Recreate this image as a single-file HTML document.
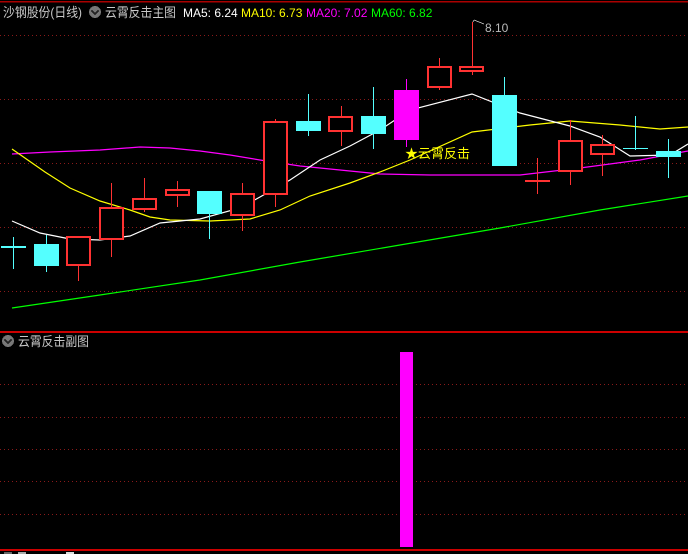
<!DOCTYPE html>
<html><head><meta charset="utf-8"><style>
html,body{margin:0;padding:0;background:#000;width:688px;height:554px;overflow:hidden}
svg{display:block}
text{font-family:"Liberation Sans","Noto Sans CJK SC",sans-serif}
</style></head><body>
<svg width="688" height="554" viewBox="0 0 688 554" xmlns="http://www.w3.org/2000/svg" shape-rendering="crispEdges">
<rect width="688" height="554" fill="#000"/>
<line x1="0" y1="1.5" x2="688" y2="1.5" stroke="#a00" stroke-width="1.5"/>
<g stroke="#8a1a1a" stroke-width="1" stroke-dasharray="1,3">
<line x1="0" y1="35.5" x2="688" y2="35.5"/>
<line x1="0" y1="99.5" x2="688" y2="99.5"/>
<line x1="0" y1="163.5" x2="688" y2="163.5"/>
<line x1="0" y1="227.5" x2="688" y2="227.5"/>
<line x1="0" y1="291.5" x2="688" y2="291.5"/>
<line x1="0" y1="384.5" x2="688" y2="384.5"/>
<line x1="0" y1="417.5" x2="688" y2="417.5"/>
<line x1="0" y1="449.5" x2="688" y2="449.5"/>
<line x1="0" y1="481.5" x2="688" y2="481.5"/>
<line x1="0" y1="514.5" x2="688" y2="514.5"/>
</g>
<line x1="0" y1="332" x2="688" y2="332" stroke="#c00" stroke-width="2"/>
<line x1="0" y1="550" x2="688" y2="550" stroke="#c00" stroke-width="2"/>

<text x="3" y="17" font-size="13" fill="#c8c8c8" textLength="79" lengthAdjust="spacingAndGlyphs">沙钢股份(日线)</text>
<circle cx="95" cy="12" r="6" fill="#777"/>
<path d="M91.5 10.5 L95 14 L98.5 10.5" stroke="#222" stroke-width="1.5" fill="none"/>
<text x="105" y="17" font-size="13" fill="#c8c8c8" textLength="71" lengthAdjust="spacingAndGlyphs">云霄反击主图</text>
<text x="183" y="17" font-size="12" fill="#fff">MA5: 6.24</text>
<text x="241" y="17" font-size="12" fill="#ff0">MA10: 6.73</text>
<text x="306" y="17" font-size="12" fill="#f0f">MA20: 7.02</text>
<text x="371" y="17" font-size="12" fill="#0f0">MA60: 6.82</text>

<g fill="none" stroke-width="1.2" shape-rendering="auto">
<polyline stroke="#0f0" points="12,308 100,295 200,280 300,262 400,245 500,228 600,210 688,196"/>
<polyline stroke="#f0f" points="12,154 50,152 100,150 140,147 170,148 200,151 230,155 260,160 300,166 340,170 380,174 430,175 520,175 580,168 640,160 688,151"/>
<polyline stroke="#ff0" points="12,149 45,172 70,188 100,201 130,210 150,217 170,220 210,221 250,219 280,210 310,196 350,183 380,172 410,160 472,132 530,125 570,121 620,125 660,129 688,127"/>
<polyline stroke="#fff" points="12,221 40,233 70,239 100,240 130,236 160,223 200,219 240,208 260,197 290,180 320,160 350,146 380,130 410,110 472,94 520,113 570,126 600,137 630,156 670,155 688,144"/>
</g>

<g stroke-width="1">
<g stroke="#54ffff" fill="#54ffff">
<line x1="13.5" y1="237" x2="13.5" y2="269"/><line x1="1" y1="247" x2="26" y2="247" stroke-width="2"/>
<line x1="46.5" y1="235" x2="46.5" y2="272"/><rect x="34" y="244" width="25" height="22" stroke="none"/>
<line x1="209.5" y1="191" x2="209.5" y2="239"/><rect x="197" y="191" width="25" height="23" stroke="none"/>
<line x1="308.5" y1="94" x2="308.5" y2="136"/><rect x="296" y="121" width="25" height="10" stroke="none"/>
<line x1="373.5" y1="87" x2="373.5" y2="149"/><rect x="361" y="116" width="25" height="18" stroke="none"/>
<line x1="504.5" y1="77" x2="504.5" y2="166"/><rect x="492" y="95" width="25" height="71" stroke="none"/>
<line x1="635.5" y1="116" x2="635.5" y2="150"/><line x1="623" y1="148.5" x2="648" y2="148.5"/>
<line x1="668.5" y1="139" x2="668.5" y2="178"/><rect x="656" y="151" width="25" height="6" stroke="none"/>
</g>
<line x1="406.5" y1="79" x2="406.5" y2="147" stroke="#f0f"/><rect x="394" y="90" width="25" height="50" fill="#f0f"/>
<g stroke="#ff3232" fill="#000" stroke-width="2">
<line x1="78.5" y1="266" x2="78.5" y2="281" stroke-width="1"/><rect x="67" y="237" width="23" height="28"/>
<line x1="111.5" y1="183" x2="111.5" y2="257" stroke-width="1"/><rect x="100" y="208" width="23" height="31"/>
<line x1="144.5" y1="178" x2="144.5" y2="212" stroke-width="1"/><rect x="133" y="199" width="23" height="10"/>
<line x1="177.5" y1="181" x2="177.5" y2="207" stroke-width="1"/><rect x="166" y="190" width="23" height="5"/>
<line x1="242.5" y1="183" x2="242.5" y2="231" stroke-width="1"/><rect x="231" y="194" width="23" height="21"/>
<line x1="275.5" y1="119" x2="275.5" y2="207" stroke-width="1"/><rect x="264" y="122" width="23" height="72"/>
<line x1="341.5" y1="106" x2="341.5" y2="146" stroke-width="1"/><rect x="329" y="117" width="23" height="14"/>
<line x1="439.5" y1="58" x2="439.5" y2="90" stroke-width="1"/><rect x="428" y="67" width="23" height="20"/>
<line x1="472.5" y1="22" x2="472.5" y2="75" stroke-width="1"/><rect x="460" y="67" width="23" height="4"/>
<line x1="537.5" y1="158" x2="537.5" y2="194" stroke-width="1"/><line x1="525" y1="181" x2="550" y2="181"/>
<line x1="570.5" y1="120" x2="570.5" y2="185" stroke-width="1"/><rect x="559" y="141" width="23" height="30"/>
<line x1="602.5" y1="135" x2="602.5" y2="176" stroke-width="1"/><rect x="591" y="145" width="23" height="9"/>
</g>
</g>

<path d="M473 22 L474 20 M474 20 L484 24" stroke="#aaa" stroke-width="1" fill="none"/>
<text x="485" y="32" font-size="12" fill="#bbb">8.10</text>
<text x="405" y="158" font-size="13" fill="#ff0">★云霄反击</text>

<circle cx="8" cy="341" r="6" fill="#777"/>
<path d="M4.5 339.5 L8 343 L11.5 339.5" stroke="#222" stroke-width="1.5" fill="none"/>
<text x="18" y="346" font-size="13" fill="#c8c8c8" textLength="71" lengthAdjust="spacingAndGlyphs">云霄反击副图</text>
<rect x="400" y="352" width="13" height="195" fill="#f0f"/>
<rect x="4" y="552" width="8" height="3" fill="#666"/>
<rect x="18" y="552" width="8" height="3" fill="#aaa"/>
<rect x="66" y="552" width="8" height="3" fill="#ddd"/>
</svg>
</body></html>
